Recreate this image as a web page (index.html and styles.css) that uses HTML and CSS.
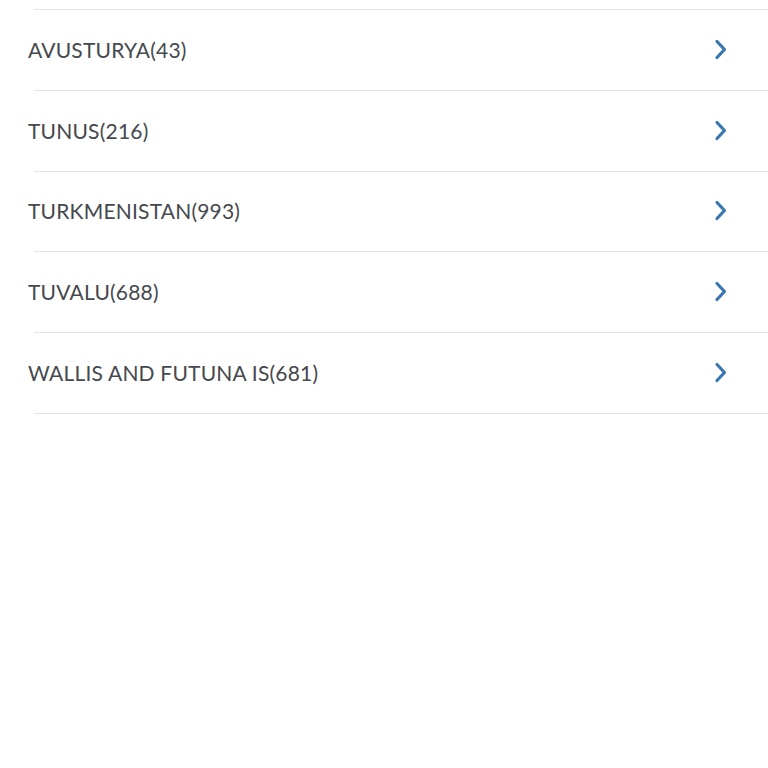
FILE: index.html
```html
<!DOCTYPE html>
<html>
<head>
<meta charset="utf-8">
<link rel="stylesheet" href="styles.css">
</head>
<body>
<ul class="list">
  <li class="row row-prev"></li>
  <li class="row"><span class="label">AVUSTURYA(43)</span><svg class="chev" viewBox="0 0 14 22"><path d="M3 2.5 L10.5 10.5 L3 18.5"/></svg></li>
  <li class="row"><span class="label">TUNUS(216)</span><svg class="chev" viewBox="0 0 14 22"><path d="M3 2.5 L10.5 10.5 L3 18.5"/></svg></li>
  <li class="row"><span class="label">TURKMENISTAN(993)</span><svg class="chev" viewBox="0 0 14 22"><path d="M3 2.5 L10.5 10.5 L3 18.5"/></svg></li>
  <li class="row"><span class="label">TUVALU(688)</span><svg class="chev" viewBox="0 0 14 22"><path d="M3 2.5 L10.5 10.5 L3 18.5"/></svg></li>
  <li class="row row-last"><span class="label">WALLIS AND FUTUNA IS(681)</span><svg class="chev" viewBox="0 0 14 22"><path d="M3 2.5 L10.5 10.5 L3 18.5"/></svg></li>
</ul>
</body>
</html>
```
FILE: styles.css
```css
html, body { margin: 0; padding: 0; background: #fff; }
body { font-family: "Source Sans Pro", Lato, "Liberation Sans", sans-serif; }
.list { list-style: none; margin: 0; padding: 0 0 0 34px; }
.row {
  height: 79.8px;
  border-bottom: 1px solid #e3e3e3;
  display: flex;
  align-items: center;
  justify-content: space-between;
}
.row-prev { height: 9px; }
.label {
  margin-left: -6px;
  margin-top: -1px;
  font-size: 21px;
  color: #45484d;
  letter-spacing: 0.2px;
}
.chev {
  width: 14px;
  height: 22px;
  margin-right: 40px;
  fill: none;
  stroke: #3a77b0;
  stroke-width: 3.2;
  stroke-linecap: round;
  stroke-linejoin: round;
}
```
